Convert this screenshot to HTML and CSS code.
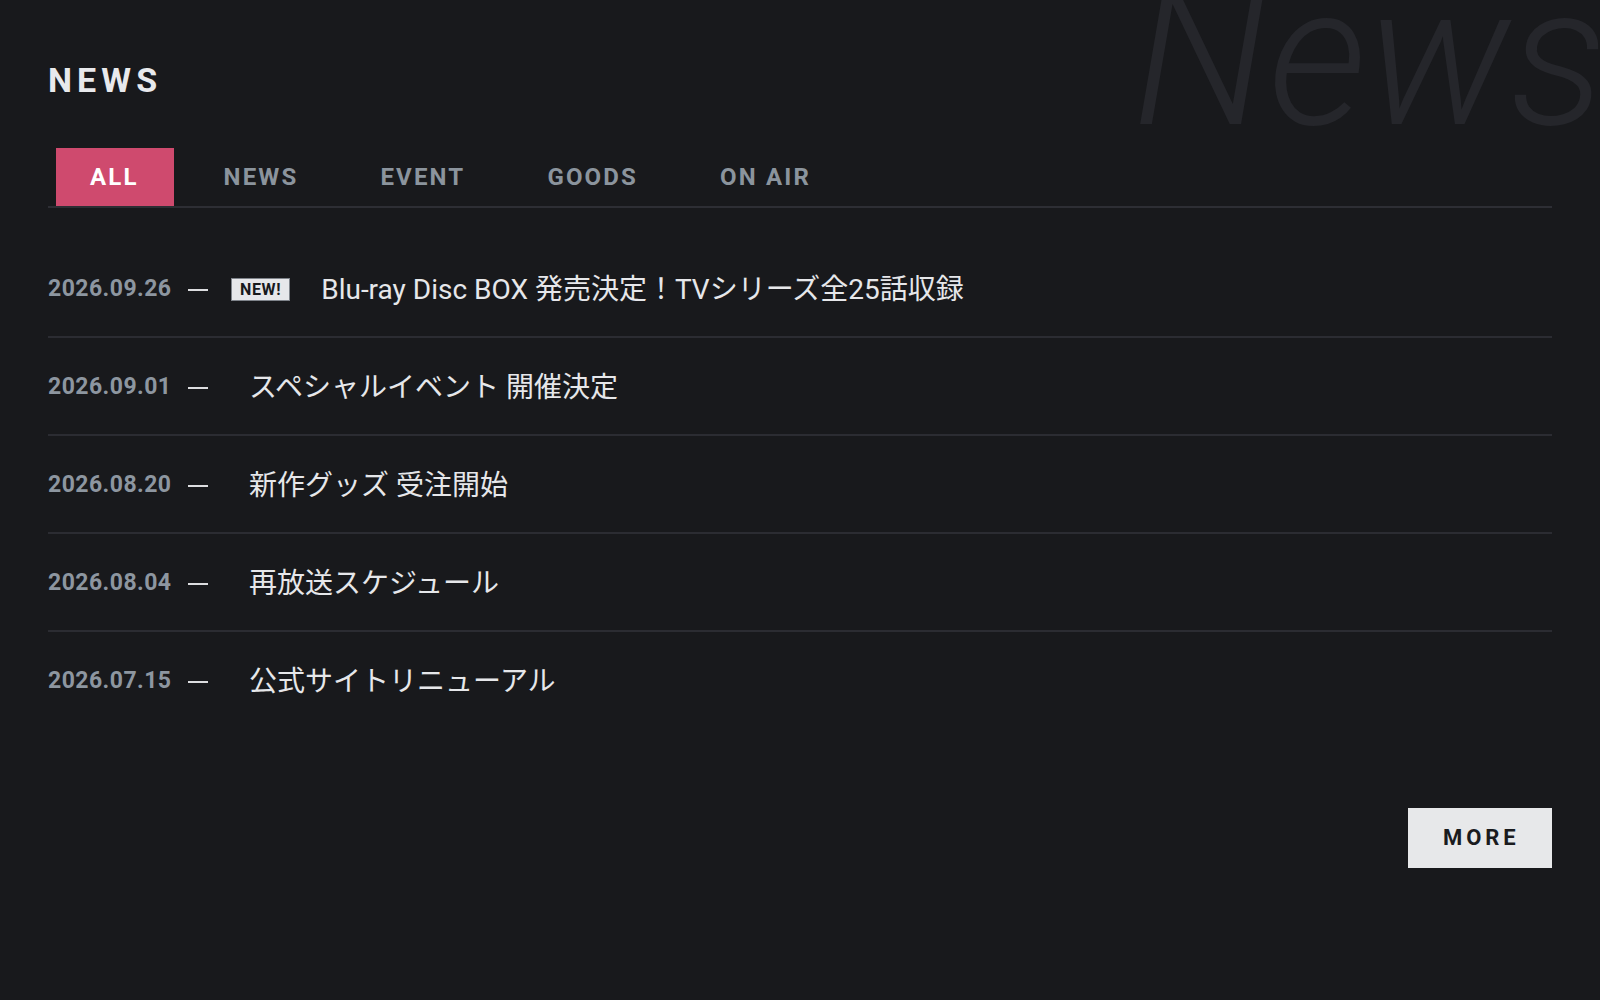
FILE: index.html
```html
<!DOCTYPE html>
<html lang="ja">
<head>
<meta charset="utf-8">
<title>NEWS</title>
<link rel="stylesheet" href="styles.css">
</head>
<body>
<section class="news">
  <div class="bg-word" aria-hidden="true">News</div>
  <h2 class="news-title">NEWS</h2>
  <nav class="tabs">
    <a class="tab is-active">ALL</a>
    <a class="tab">NEWS</a>
    <a class="tab">EVENT</a>
    <a class="tab">GOODS</a>
    <a class="tab">ON AIR</a>
  </nav>
  <ul class="news-list">
    <li class="news-item">
      <span class="date">2026.09.26</span>
      <span class="dash"></span>
      <span class="badge">NEW!</span>
      <span class="headline with-badge">Blu-ray Disc BOX 発売決定！TVシリーズ全25話収録</span>
    </li>
    <li class="news-item">
      <span class="date">2026.09.01</span>
      <span class="dash"></span>
      <span class="headline">スペシャルイベント 開催決定</span>
    </li>
    <li class="news-item">
      <span class="date">2026.08.20</span>
      <span class="dash"></span>
      <span class="headline">新作グッズ 受注開始</span>
    </li>
    <li class="news-item">
      <span class="date">2026.08.04</span>
      <span class="dash"></span>
      <span class="headline">再放送スケジュール</span>
    </li>
    <li class="news-item">
      <span class="date">2026.07.15</span>
      <span class="dash"></span>
      <span class="headline">公式サイトリニューアル</span>
    </li>
  </ul>
  <div class="more-wrap">
    <a class="more">MORE</a>
  </div>
</section>
</body>
</html>
```

FILE: styles.css
```css
html, body {
  margin: 0;
  padding: 0;
}
body {
  background: #18191c;
  color: #e6e7ea;
  font-family: Roboto, "Noto Sans CJK JP", sans-serif;
  width: 1600px;
  height: 1000px;
  overflow: hidden;
}
.news {
  position: relative;
  padding: 60px 48px 0;
  height: 1000px;
  box-sizing: border-box;
}
.bg-word {
  position: absolute;
  top: -41px;
  left: 1133px;
  font-family: Roboto, sans-serif;
  font-size: 196px;
  line-height: 196px;
  font-weight: 300;
  font-style: italic;
  color: #25262b;
  white-space: nowrap;
  pointer-events: none;
  z-index: 0;
}
.news-title {
  position: relative;
  margin: 0;
  font-size: 34px;
  line-height: 40px;
  font-weight: 700;
  letter-spacing: 0.15em;
  color: #e8e9ec;
}
.tabs {
  position: relative;
  display: flex;
  margin-top: 48px;
  border-bottom: 2px solid #2d2e34;
}
.tab {
  display: block;
  margin: 0 8px;
  padding: 0 32px 0 34px;
  height: 58px;
  line-height: 58px;
  font-size: 24px;
  font-weight: 700;
  letter-spacing: 0.09em;
  color: #8b949d;
}
.tab:first-child {
  padding-right: 35px;
}
.tab.is-active {
  background: #cf4a6e;
  color: #ffffff;
}
.news-list {
  list-style: none;
  margin: 32px 0 0;
  padding: 0;
}
.news-item {
  display: flex;
  align-items: center;
  height: 96px;
  border-bottom: 2px solid #2b2c32;
}
.news-item:last-child {
  border-bottom: none;
}
.date {
  font-size: 23px;
  font-weight: 700;
  letter-spacing: 0.02em;
  color: #8d96a0;
  width: 123px;
  white-space: nowrap;
}
.dash {
  display: block;
  width: 20px;
  height: 2px;
  margin: 4px 23px 0 17px;
  background: #dcdde0;
}
.badge {
  display: block;
  height: 21px;
  line-height: 21px;
  padding: 0 8px;
  border: 1px solid #7e838a;
  background: #e6e7ea;
  color: #18191c;
  font-size: 16px;
  font-weight: 700;
  letter-spacing: 0.04em;
  margin-top: 3px;
}
.headline {
  padding-left: 18px;
  margin-top: -2px;
  font-size: 28px;
  color: #e6e7ea;
  white-space: nowrap;
}
.headline.with-badge {
  padding-left: 31px;
}
.more-wrap {
  display: flex;
  justify-content: flex-end;
  margin-top: 80px;
}
.more {
  display: block;
  width: 144px;
  height: 60px;
  line-height: 60px;
  text-align: center;
  background: #e7e8ea;
  color: #1a1b1e;
  font-size: 22px;
  font-weight: 700;
  letter-spacing: 0.18em;
  text-indent: 0.12em;
}
```
